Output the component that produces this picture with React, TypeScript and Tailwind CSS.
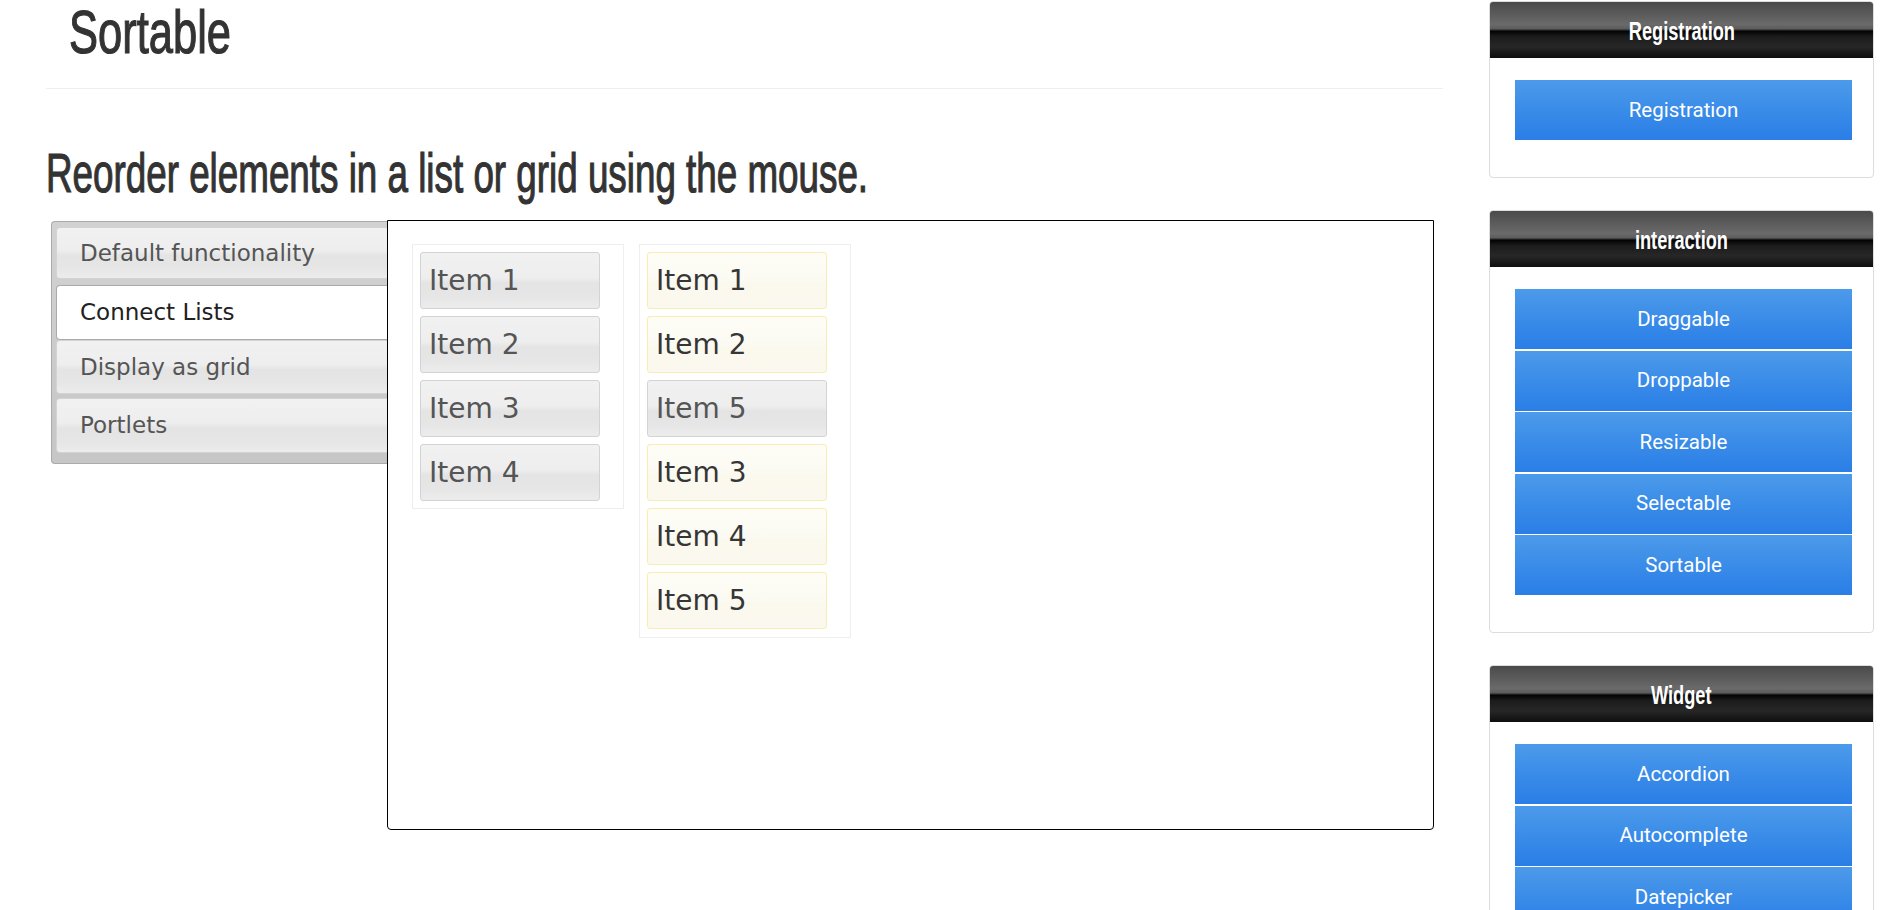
import React from "react";

const tabs = [
  { label: "Default functionality", active: false, cls: "h-[52px] mt-0" },
  { label: "Connect Lists", active: true, cls: "h-[55px] mt-[6px]" },
  { label: "Display as grid", active: false, cls: "h-[54px] mt-0" },
  { label: "Portlets", active: false, cls: "h-[55px] mt-[4px]" },
];

const leftItems = ["Item 1", "Item 2", "Item 3", "Item 4"];
const rightItems: { label: string; hl: boolean }[] = [
  { label: "Item 1", hl: true },
  { label: "Item 2", hl: true },
  { label: "Item 5", hl: false },
  { label: "Item 3", hl: true },
  { label: "Item 4", hl: true },
  { label: "Item 5", hl: true },
];

const glass =
  "bg-[linear-gradient(to_bottom,#f1f1f1_0%,#eeeeee_45%,#e4e4e4_55%,#e6e6e6_80%,#ececec_100%)]";
const hlGlass =
  "bg-[linear-gradient(to_bottom,#fdfcf6_0%,#fcfbf3_45%,#fbf9ee_55%,#fbf9ef_100%)]";

function Item({ label, hl }: { label: string; hl: boolean }) {
  return (
    <div
      className={
        "ml-[7px] w-[180px] h-[57px] shrink-0 flex items-center pl-[8px] rounded-[3px] border font-['DejaVu_Sans',sans-serif] text-[28px] " +
        (hl
          ? "border-[#f8eeb0] text-[#363636] " + hlGlass
          : "border-[#d3d3d3] text-[#555555] " + glass)
      }
    >
      {label}
    </div>
  );
}

function Panel({ title, items }: { title: string; items: string[] }) {
  return (
    <div className="w-[385px] shrink-0 border border-[#dddddd] rounded-[4px] overflow-hidden bg-white">
      <div className="h-[56px] flex items-center justify-center pt-[3px] bg-[linear-gradient(to_bottom,#4a4a4a_0%,#6a6a6a_40%,#5c5c5c_48%,#030303_52%,#1c1c1c_62%,#272727_80%,#0e0e0e_100%)]">
        <span className="inline-block scale-x-[0.7] whitespace-nowrap font-['Liberation_Sans_Narrow','Liberation_Sans',sans-serif] text-[26px] font-bold text-white">
          {title}
        </span>
      </div>
      <div className="pt-[22px] pb-[37px] pl-[25px] flex flex-col gap-[1.5px]">
        {items.map((it) => (
          <div
            key={it}
            className="w-[337px] h-[60px] shrink-0 flex items-center justify-center bg-[linear-gradient(to_bottom,#4c9aea_0%,#3a8ce8_50%,#2a7ee6_100%)] text-white font-['Roboto',sans-serif] text-[20.5px]"
          >
            {it}
          </div>
        ))}
      </div>
    </div>
  );
}

export default function App() {
  return (
    <div className="w-[1894px] h-[910px] overflow-hidden bg-white flex">
      <div className="ml-[46px] w-[1397px] shrink-0 flex flex-col">
        <div className="pl-[23px] pt-[2px] h-[63px] shrink-0">
          <h1 className="inline-block origin-left scale-x-[0.713] whitespace-nowrap font-['Liberation_Sans_Narrow','Liberation_Sans',sans-serif] font-normal [-webkit-text-stroke:1.2px_#333333] text-[61px] leading-[61px] text-[#333333]">
            Sortable
          </h1>
        </div>
        <div className="mt-[25px] shrink-0 border-t border-[#eeeeee]" />
        <div className="mt-[56px] h-[56px] shrink-0">
          <h2 className="inline-block origin-left scale-x-[0.657] whitespace-nowrap font-['Liberation_Sans_Narrow','Liberation_Sans',sans-serif] font-normal [-webkit-text-stroke:1.2px_#333333] text-[56px] leading-[56px] text-[#333333]">
            Reorder elements in a list or grid using the mouse.
          </h2>
        </div>
        <div className="mt-[19px] flex items-start shrink-0">
          <div className="ml-[5px] mt-px w-[337px] pt-[5px] pb-[10px] pl-[4px] border border-r-0 border-[#aaaaaa] rounded-l-[4px] bg-[linear-gradient(to_bottom,#d2d2d2_0%,#cccccc_50%,#c6c6c6_100%)]">
            {tabs.map((t) => (
              <div
                key={t.label}
                className={
                  t.cls +
                  " flex items-center pl-[23px] border border-r-0 rounded-l-[4px] font-['DejaVu_Sans',sans-serif] text-[23px] " +
                  (t.active
                    ? "bg-white border-[#aaaaaa] text-[#212121]"
                    : "border-[#d3d3d3] text-[#555555] " + glass)
                }
              >
                {t.label}
              </div>
            ))}
          </div>
          <div className="-ml-px w-[1047px] h-[610px] border border-black rounded-b-[4px] bg-white pt-[23px] pl-[24px] flex items-start gap-[15px]">
            <div className="w-[212px] border border-[#eeeeee] pt-[7px] pb-[7px] flex flex-col gap-[7px]">
              {leftItems.map((l) => (
                <Item key={l} label={l} hl={false} />
              ))}
            </div>
            <div className="w-[212px] border border-[#eeeeee] pt-[7px] pb-[8px] flex flex-col gap-[7px]">
              {rightItems.map((r, i) => (
                <Item key={i} label={r.label} hl={r.hl} />
              ))}
            </div>
          </div>
        </div>
      </div>
      <div className="ml-[46px] mt-px flex flex-col gap-[32px]">
        <Panel title="Registration" items={["Registration"]} />
        <Panel
          title="interaction"
          items={["Draggable", "Droppable", "Resizable", "Selectable", "Sortable"]}
        />
        <Panel
          title="Widget"
          items={["Accordion", "Autocomplete", "Datepicker", "Dialog", "Menu"]}
        />
      </div>
    </div>
  );
}
